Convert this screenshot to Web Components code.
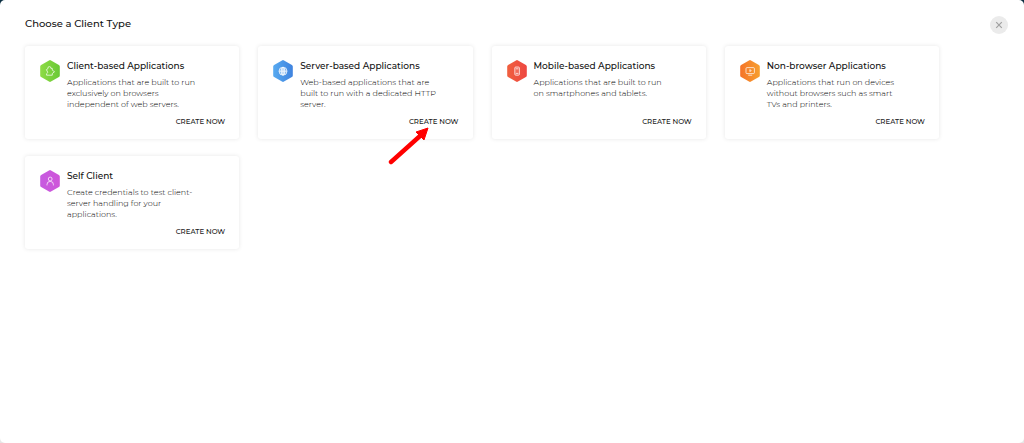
<!DOCTYPE html>
<html lang="en">
<head>
<meta charset="utf-8">
<meta name="viewport" content="width=device-width, initial-scale=1">
<title>Choose a Client Type</title>
<style>
  body {
    margin: 0;
    background: linear-gradient(#0b2f42 50%, #e6e6e6 50%);
    font-family: Montserrat, Inter, "Open Sans", sans-serif;
    color: #111;
  }
</style>
</head>
<body>
<client-sheet heading="Choose a Client Type">
  <client-card heading="Client-based Applications" icon="puzzle">Applications that are built to run exclusively on browsers independent of web servers.</client-card>
  <client-card heading="Server-based Applications" icon="globe">Web-based applications that are built to run with a dedicated HTTP server.<pointer-arrow slot="marker"></pointer-arrow></client-card>
  <client-card heading="Mobile-based Applications" icon="phone">Applications that are built to run on smartphones and tablets.</client-card>
  <client-card heading="Non-browser Applications" icon="screen">Applications that run on devices without browsers such as smart TVs and printers.</client-card>
  <client-card heading="Self Client" icon="person">Create credentials to test client-server handling for your applications.</client-card>
</client-sheet>

<script>
const ICONS = {
  puzzle: {
    colors: ['#8edb45', '#69c936'],
    shape: '<path d="M6.4 9.6 8 8.6a1.5 1.5 0 1 1 2.9-.2h1.4v1.8l2.2 1.5-2.2 1.8v1.7H6.6v-1.5l1.2-1.2z"/>'
  },
  globe: {
    colors: ['#58aaf0', '#3f83df'],
    fill: 0.3,
    shape: '<circle cx="10" cy="11.2" r="4"/><ellipse cx="10" cy="11.2" rx="1.8" ry="4"/><path d="M6 11.2h8M10 7.2v8"/>'
  },
  phone: {
    colors: ['#f0603f', '#ee4741'],
    fill: 0.15,
    shape: '<rect x="7.8" y="7" width="4.6" height="8.2" rx="1"/><path d="M8.8 8.8h2.6M8.8 13.4h2.6"/>'
  },
  screen: {
    colors: ['#f57328', '#f7a02f'],
    shape: '<rect x="6" y="7.6" width="8.4" height="6" rx="1"/><path d="M8.2 15.2h4M9.8 9.6v2l1.5-1z"/>'
  },
  person: {
    colors: ['#c65be0', '#cf55d9'],
    shape: '<circle cx="10.2" cy="9" r="1.9"/><path d="M7 15.4v-1a3.2 3 0 0 1 6.4 0v1"/>'
  }
}

class HexIcon extends HTMLElement {
  constructor() {
    super()
    this.attachShadow({ mode: 'open' })
  }

  connectedCallback() {
    const icon = ICONS[this.getAttribute('name')]
    this.shadowRoot.innerHTML = `
      <style>
        :host {
          display: block;
          width: 20px;
          height: 22px;
        }
        svg {
          display: block;
        }
      </style>
      <svg width="20" height="22" viewBox="0 0 20 22" aria-hidden="true">
        <linearGradient id="fill">
          <stop offset="0" stop-color="${icon.colors[0]}"/>
          <stop offset="1" stop-color="${icon.colors[1]}"/>
        </linearGradient>
        <path fill="url(#fill)" d="M9 .4q1-.6 2 0l7.9 4.5q.9.5.9 1.5v9.2q0 1-.9 1.5L11 21.6q-1 .6-2 0l-7.9-4.5q-.9-.5-.9-1.5V6.4q0-1 .9-1.5z"/>
        <g fill="#fff" fill-opacity="${icon.fill || 0}" stroke="#fff" stroke-opacity=".8" stroke-width=".9" stroke-linejoin="round">${icon.shape}</g>
      </svg>
    `
  }
}

class PointerArrow extends HTMLElement {
  constructor() {
    super()
    this.attachShadow({ mode: 'open' })
    this.shadowRoot.innerHTML = `
      <style>
        :host {
          display: block;
          pointer-events: none;
        }
        svg {
          display: block;
        }
      </style>
      <svg width="42" height="40" viewBox="0 0 42 40" aria-hidden="true">
        <path d="M3 36 32 10" stroke="#f00" stroke-width="4.4" stroke-linecap="round"/>
        <path d="M40 2 36 14 28 6z" fill="#f00" stroke="#f00" stroke-linejoin="round"/>
      </svg>
    `
  }
}

class ClientCard extends HTMLElement {
  constructor() {
    super()
    this.attachShadow({ mode: 'open' })
  }

  connectedCallback() {
    const heading = this.getAttribute('heading')
    this.shadowRoot.innerHTML = `
      <style>
        :host {
          display: block;
          position: relative;
        }
        article {
          box-sizing: border-box;
          height: 100%;
          display: flex;
          flex-direction: column;
          padding: 14px 14px 11px 15px;
          border-radius: 3px;
          background: #fff;
          box-shadow: 0 0 4px rgba(0, 0, 0, 0.1);
        }
        .info {
          flex: 1;
          display: flex;
          gap: 7px;
        }
        hex-icon {
          flex: none;
        }
        h2 {
          margin: 0 0 5px;
          font-size: 9px;
          line-height: 12px;
          font-weight: 500;
          white-space: nowrap;
        }
        p {
          margin: 0;
          max-width: 140px;
          font-size: 8px;
          line-height: 11px;
          font-weight: 300;
          color: #000;
        }
        button {
          align-self: flex-end;
          margin: 6px 0 0;
          padding: 0;
          border: 0;
          background: none;
          font: 500 7px/12px Montserrat, Inter, "Open Sans", sans-serif;
          color: #222;
          cursor: pointer;
        }
        ::slotted([slot="marker"]) {
          position: absolute;
          top: 80px;
          right: 43px;
        }
      </style>
      <article>
        <div class="info">
          <hex-icon name="${this.getAttribute('icon')}"></hex-icon>
          <div>
            <h2>${heading}</h2>
            <p><slot></slot></p>
          </div>
        </div>
        <button type="button">CREATE NOW</button>
      </article>
      <slot name="marker"></slot>
    `
  }
}

class ClientSheet extends HTMLElement {
  constructor() {
    super()
    this.attachShadow({ mode: 'open' })
  }

  connectedCallback() {
    this.shadowRoot.innerHTML = `
      <style>
        :host {
          display: block;
          box-sizing: border-box;
          min-height: 100vh;
          padding: 16px 16px 24px 25px;
          border-radius: 5px;
          background: #fff;
        }
        header {
          display: flex;
          justify-content: space-between;
          align-items: flex-start;
        }
        h1 {
          margin: 0;
          font-size: 10px;
          line-height: 15px;
          font-weight: 500;
        }
        button {
          display: flex;
          align-items: center;
          justify-content: center;
          width: 18px;
          height: 18px;
          padding: 0;
          border: 0;
          border-radius: 50%;
          background: #ebebeb;
          cursor: pointer;
        }
        main {
          display: grid;
          grid-template-columns: repeat(auto-fill, minmax(200px, 1fr));
          gap: 17px 19px;
          margin: 12px 69px 0 0;
        }
      </style>
      <header>
        <h1>${this.getAttribute('heading')}</h1>
        <button type="button" aria-label="Close">
          <svg width="8" height="8" viewBox="0 0 8 8"><path d="M1.2 1.2 6.8 6.8M6.8 1.2 1.2 6.8" stroke="#a0a0a0" stroke-width="1.2"/></svg>
        </button>
      </header>
      <main><slot></slot></main>
    `
  }
}

customElements.define('hex-icon', HexIcon)
customElements.define('pointer-arrow', PointerArrow)
customElements.define('client-card', ClientCard)
customElements.define('client-sheet', ClientSheet)
</script>
</body>
</html>
